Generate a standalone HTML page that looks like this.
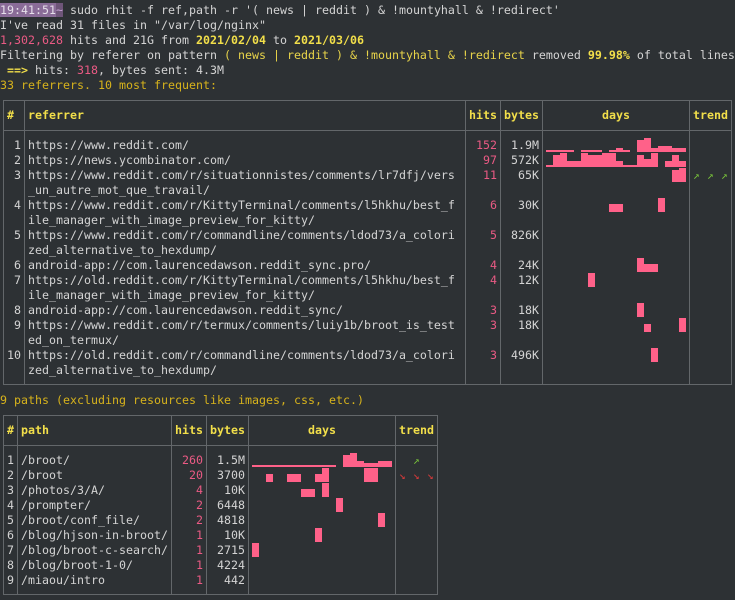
<!DOCTYPE html>
<html><head><meta charset="utf-8"><style>
html,body{margin:0;padding:0;background:#2d3134;}
#s{position:relative;width:735px;height:600px;overflow:hidden;background:#2d3134;font-family:"DejaVu Sans Mono","Liberation Mono",monospace;font-size:11.63px;color:#d4d4d4;}
#s span,#s div{position:absolute;white-space:pre;line-height:15px;}
.y{color:#f2df4a;font-weight:bold}
.yo{color:#e8d44a}
.o{color:#d7b31c}
.p{color:#ea5a84}
.hl{background:#8a6c98;color:#e6e0ea}
.hr{background:#63676a;height:1px}
.vr{background:#63676a;width:1px}
.bar{background:#ff6189}
.r{text-align:right}
.g{color:#78c23a;font-size:11px}
.rd{color:#d93a3a;font-size:11px}
</style></head><body><div id="s">
<span style="left:0;top:3px"><span class="hl" style="position:static">19:41:51</span><span style="position:static;color:#c7a3d6;background:#6e5579">~</span> sudo rhit -f ref,path -r '( news | reddit ) &amp; !mountyhall &amp; !redirect'</span>
<span style="left:0;top:18px">I've read 31 files in "/var/log/nginx"</span>
<span style="left:0;top:33px"><span class="p" style="position:static">1,302,628</span> hits and 21G from <span class="y" style="position:static">2021/02/04</span> to <span class="y" style="position:static">2021/03/06</span></span>
<span style="left:0;top:48px">Filtering by referer on pattern <span class="yo" style="position:static">( news | reddit ) &amp; !mountyhall &amp; !redirect</span> removed <span class="y" style="position:static">99.98%</span> of total lines</span>
<span style="left:0;top:63px"><span class="y" style="position:static"> ==&gt;</span> hits: <span class="p" style="position:static">318</span>, bytes sent: 4.3M</span>
<span class="o" style="left:0;top:78px">33 referrers. 10 most frequent:</span>

<div class="hr" style="left:3px;top:100px;width:729px"></div>
<div class="hr" style="left:3px;top:130px;width:729px"></div>
<div class="hr" style="left:3px;top:384px;width:729px"></div>
<div class="vr" style="left:3px;top:100px;height:285px"></div>
<div class="vr" style="left:24px;top:100px;height:285px"></div>
<div class="vr" style="left:465px;top:100px;height:285px"></div>
<div class="vr" style="left:500px;top:100px;height:285px"></div>
<div class="vr" style="left:542px;top:100px;height:285px"></div>
<div class="vr" style="left:689px;top:100px;height:285px"></div>
<div class="vr" style="left:731px;top:100px;height:285px"></div>
<span class="y" style="left:7px;top:108px">#</span>
<span class="y" style="left:28px;top:108px">referrer</span>
<span class="y" style="left:469px;top:108px">hits</span>
<span class="y" style="left:504px;top:108px">bytes</span>
<span class="y" style="left:602px;top:108px">days</span>
<span class="y" style="left:693px;top:108px">trend</span>

<span class="r" style="left:7px;width:14px;top:138px">1</span><span style="left:28px;top:138px">https://www.reddit.com/</span><span class="r p" style="left:462px;width:35px;top:138px">152</span><span class="r" style="left:504px;width:35px;top:138px">1.9M</span>
<span class="r" style="left:7px;width:14px;top:153px">2</span><span style="left:28px;top:153px">https://news.ycombinator.com/</span><span class="r p" style="left:462px;width:35px;top:153px">97</span><span class="r" style="left:504px;width:35px;top:153px">572K</span>
<span class="r" style="left:7px;width:14px;top:168px">3</span><span style="left:28px;top:168px">https://www.reddit.com/r/situationnistes/comments/lr7dfj/vers
_un_autre_mot_que_travail/</span><span class="r p" style="left:462px;width:35px;top:168px">11</span><span class="r" style="left:504px;width:35px;top:168px">65K</span>
<span class="r" style="left:7px;width:14px;top:198px">4</span><span style="left:28px;top:198px">https://www.reddit.com/r/KittyTerminal/comments/l5hkhu/best_f
ile_manager_with_image_preview_for_kitty/</span><span class="r p" style="left:462px;width:35px;top:198px">6</span><span class="r" style="left:504px;width:35px;top:198px">30K</span>
<span class="r" style="left:7px;width:14px;top:228px">5</span><span style="left:28px;top:228px">https://www.reddit.com/r/commandline/comments/ldod73/a_colori
zed_alternative_to_hexdump/</span><span class="r p" style="left:462px;width:35px;top:228px">5</span><span class="r" style="left:504px;width:35px;top:228px">826K</span>
<span class="r" style="left:7px;width:14px;top:258px">6</span><span style="left:28px;top:258px">android-app://com.laurencedawson.reddit_sync.pro/</span><span class="r p" style="left:462px;width:35px;top:258px">4</span><span class="r" style="left:504px;width:35px;top:258px">24K</span>
<span class="r" style="left:7px;width:14px;top:273px">7</span><span style="left:28px;top:273px">https://old.reddit.com/r/KittyTerminal/comments/l5hkhu/best_f
ile_manager_with_image_preview_for_kitty/</span><span class="r p" style="left:462px;width:35px;top:273px">4</span><span class="r" style="left:504px;width:35px;top:273px">12K</span>
<span class="r" style="left:7px;width:14px;top:303px">8</span><span style="left:28px;top:303px">android-app://com.laurencedawson.reddit_sync/</span><span class="r p" style="left:462px;width:35px;top:303px">3</span><span class="r" style="left:504px;width:35px;top:303px">18K</span>
<span class="r" style="left:7px;width:14px;top:318px">9</span><span style="left:28px;top:318px">https://www.reddit.com/r/termux/comments/luiy1b/broot_is_test
ed_on_termux/</span><span class="r p" style="left:462px;width:35px;top:318px">3</span><span class="r" style="left:504px;width:35px;top:318px">18K</span>
<span class="r" style="left:7px;width:14px;top:348px">10</span><span style="left:28px;top:348px">https://old.reddit.com/r/commandline/comments/ldod73/a_colori
zed_alternative_to_hexdump/</span><span class="r p" style="left:462px;width:35px;top:348px">3</span><span class="r" style="left:504px;width:35px;top:348px">496K</span>

<div class="bar" style="left:546px;top:150px;width:28px;height:2px"></div>
<div class="bar" style="left:581px;top:150px;width:21px;height:2px"></div>
<div class="bar" style="left:609px;top:150px;width:7px;height:2px"></div>
<div class="bar" style="left:616px;top:148px;width:7px;height:4px"></div>
<div class="bar" style="left:623px;top:150px;width:7px;height:2px"></div>
<div class="bar" style="left:637px;top:140px;width:7px;height:12px"></div>
<div class="bar" style="left:644px;top:138px;width:7px;height:14px"></div>
<div class="bar" style="left:651px;top:148px;width:7px;height:4px"></div>
<div class="bar" style="left:658px;top:146px;width:14px;height:6px"></div>
<div class="bar" style="left:672px;top:148px;width:14px;height:4px"></div>

<div class="bar" style="left:546px;top:165px;width:7px;height:2px"></div>
<div class="bar" style="left:553px;top:155px;width:7px;height:12px"></div>
<div class="bar" style="left:560px;top:153px;width:7px;height:14px"></div>
<div class="bar" style="left:567px;top:161px;width:14px;height:6px"></div>
<div class="bar" style="left:581px;top:153px;width:7px;height:14px"></div>
<div class="bar" style="left:588px;top:155px;width:14px;height:12px"></div>
<div class="bar" style="left:602px;top:153px;width:14px;height:14px"></div>
<div class="bar" style="left:616px;top:161px;width:7px;height:6px"></div>
<div class="bar" style="left:623px;top:165px;width:14px;height:2px"></div>
<div class="bar" style="left:637px;top:155px;width:7px;height:12px"></div>
<div class="bar" style="left:644px;top:159px;width:7px;height:8px"></div>
<div class="bar" style="left:651px;top:153px;width:7px;height:14px"></div>
<div class="bar" style="left:665px;top:161px;width:7px;height:6px"></div>
<div class="bar" style="left:672px;top:155px;width:7px;height:12px"></div>
<div class="bar" style="left:679px;top:161px;width:7px;height:6px"></div>

<div class="bar" style="left:672px;top:170px;width:7px;height:12px"></div>
<div class="bar" style="left:679px;top:168px;width:7px;height:14px"></div>
<div class="bar" style="left:609px;top:204px;width:14px;height:8px"></div>
<div class="bar" style="left:658px;top:198px;width:7px;height:14px"></div>
<div class="bar" style="left:637px;top:258px;width:7px;height:14px"></div>
<div class="bar" style="left:644px;top:264px;width:14px;height:8px"></div>
<div class="bar" style="left:588px;top:273px;width:7px;height:14px"></div>
<div class="bar" style="left:637px;top:303px;width:7px;height:14px"></div>
<div class="bar" style="left:644px;top:324px;width:7px;height:8px"></div>
<div class="bar" style="left:679px;top:318px;width:7px;height:14px"></div>
<div class="bar" style="left:651px;top:348px;width:7px;height:14px"></div>

<span class="g" style="left:693px;top:168px">↗</span>
<span class="g" style="left:707px;top:168px">↗</span>
<span class="g" style="left:721px;top:168px">↗</span>

<span class="o" style="left:0;top:393px">9 paths (excluding resources like images, css, etc.)</span>

<div class="hr" style="left:3px;top:415px;width:435px"></div>
<div class="hr" style="left:3px;top:445px;width:435px"></div>
<div class="hr" style="left:3px;top:594px;width:435px"></div>
<div class="vr" style="left:3px;top:415px;height:180px"></div>
<div class="vr" style="left:17px;top:415px;height:180px"></div>
<div class="vr" style="left:171px;top:415px;height:180px"></div>
<div class="vr" style="left:206px;top:415px;height:180px"></div>
<div class="vr" style="left:248px;top:415px;height:180px"></div>
<div class="vr" style="left:395px;top:415px;height:180px"></div>
<div class="vr" style="left:437px;top:415px;height:180px"></div>
<span class="y" style="left:7px;top:423px">#</span>
<span class="y" style="left:21px;top:423px">path</span>
<span class="y" style="left:175px;top:423px">hits</span>
<span class="y" style="left:210px;top:423px">bytes</span>
<span class="y" style="left:308px;top:423px">days</span>
<span class="y" style="left:399px;top:423px">trend</span>

<span style="left:7px;top:453px">1
2
3
4
5
6
7
8
9</span>
<span style="left:21px;top:453px">/broot/
/broot
/photos/3/A/
/prompter/
/broot/conf_file/
/blog/hjson-in-broot/
/blog/broot-c-search/
/blog/broot-1-0/
/miaou/intro</span>
<span class="r p" style="left:168px;width:35px;top:453px">260
20
4
2
2
1
1
1
1</span>
<span class="r" style="left:203px;width:42px;top:453px">1.5M
3700
10K
6448
4818
10K
2715
4224
442</span>

<div class="bar" style="left:252px;top:465px;width:84px;height:2px"></div>
<div class="bar" style="left:343px;top:455px;width:7px;height:12px"></div>
<div class="bar" style="left:350px;top:453px;width:7px;height:14px"></div>
<div class="bar" style="left:357px;top:461px;width:7px;height:6px"></div>
<div class="bar" style="left:364px;top:463px;width:14px;height:4px"></div>
<div class="bar" style="left:378px;top:461px;width:14px;height:6px"></div>
<div class="bar" style="left:266px;top:474px;width:7px;height:8px"></div>
<div class="bar" style="left:287px;top:474px;width:14px;height:8px"></div>
<div class="bar" style="left:315px;top:474px;width:7px;height:8px"></div>
<div class="bar" style="left:322px;top:468px;width:7px;height:14px"></div>
<div class="bar" style="left:364px;top:468px;width:14px;height:14px"></div>
<div class="bar" style="left:301px;top:489px;width:14px;height:8px"></div>
<div class="bar" style="left:322px;top:483px;width:7px;height:14px"></div>
<div class="bar" style="left:336px;top:498px;width:7px;height:14px"></div>
<div class="bar" style="left:378px;top:513px;width:7px;height:14px"></div>
<div class="bar" style="left:315px;top:528px;width:7px;height:14px"></div>
<div class="bar" style="left:252px;top:543px;width:7px;height:14px"></div>

<span class="g" style="left:413px;top:453px">↗</span>
<span class="rd" style="left:399px;top:468px">↘</span>
<span class="rd" style="left:413px;top:468px">↘</span>
<span class="rd" style="left:427px;top:468px">↘</span>
</div></body></html>
